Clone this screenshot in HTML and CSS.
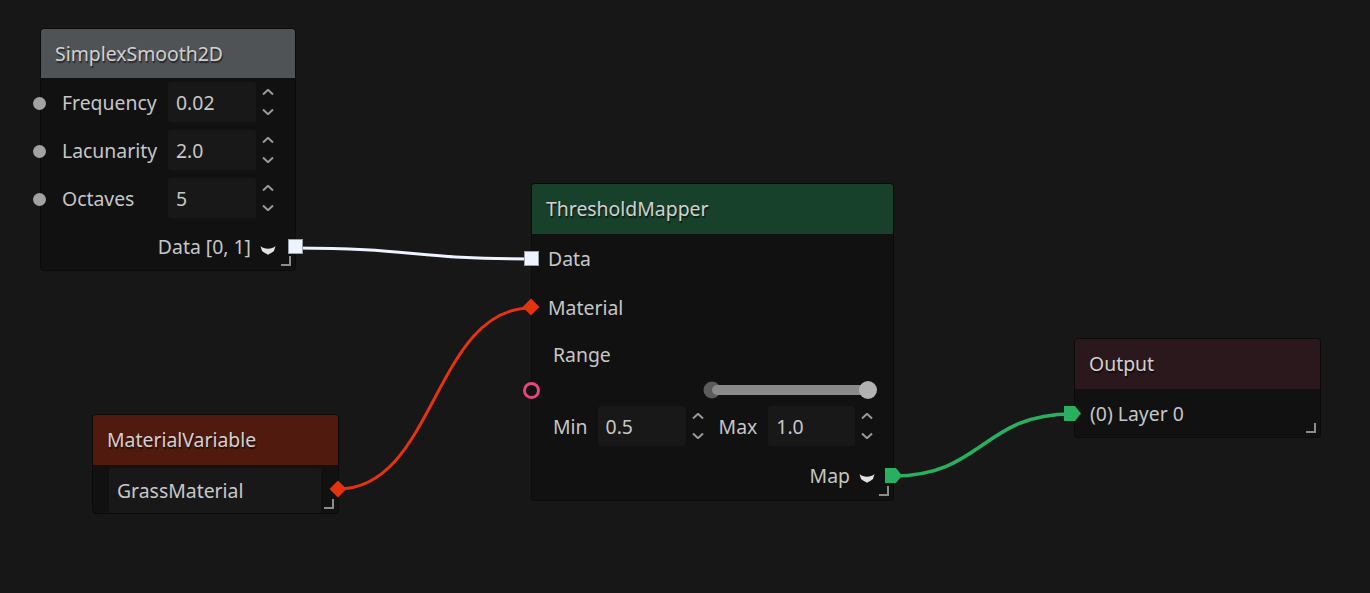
FILE: index.html
```html
<!DOCTYPE html>
<html>
<head>
<meta charset="utf-8">
<link rel="stylesheet" href="styles.css">
</head>
<body>
<div class="graph">
  <svg class="wires" width="1370" height="593" viewBox="0 0 1370 593">
    <path class="wire wire-data" d="M295 248 C413 248 413 259 531 259"/>
    <path class="wire wire-mat" d="M338 489 C435 489 434 308 531 308"/>
    <path class="wire wire-map" d="M893 476 C983 476 982 414 1072 414"/>
  </svg>

  <div class="node n-simplex">
    <div class="title t-gray">SimplexSmooth2D</div>
    <div class="row prop">
      <span class="port p-circle"></span>
      <span class="label">Frequency</span>
      <span class="field">0.02</span>
      <svg class="spin" viewBox="0 0 12 26"><path d="M1 5.5 L6 0.8 L11 5.5 M1 20.5 L6 25.2 L11 20.5"/></svg>
    </div>
    <div class="row prop">
      <span class="port p-circle"></span>
      <span class="label">Lacunarity</span>
      <span class="field">2.0</span>
      <svg class="spin" viewBox="0 0 12 26"><path d="M1 5.5 L6 0.8 L11 5.5 M1 20.5 L6 25.2 L11 20.5"/></svg>
    </div>
    <div class="row prop">
      <span class="port p-circle"></span>
      <span class="label">Octaves</span>
      <span class="field">5</span>
      <svg class="spin" viewBox="0 0 12 26"><path d="M1 5.5 L6 0.8 L11 5.5 M1 20.5 L6 25.2 L11 20.5"/></svg>
    </div>
    <div class="row out-row out-simplex">
      <span class="label">Data [0, 1]</span>
      <svg class="drop" viewBox="0 0 16 10"><path d="M0.5 1 C4 4.5 12 4.5 15.5 1 L14 6 C11 8.5 9 8.5 8 10 C7 8.5 5 8.5 2 6 Z"/></svg>
      <span class="port p-square p-right"></span>
    </div>
    <span class="grip"></span>
  </div>

  <div class="node n-threshold">
    <div class="title t-green">ThresholdMapper</div>
    <div class="row in-row r48">
      <span class="port p-square p-left"></span>
      <span class="label">Data</span>
    </div>
    <div class="row in-row r50">
      <span class="port p-diamond p-left-d"></span>
      <span class="label">Material</span>
    </div>
    <div class="row ctl-row r44">
      <span class="label">Range</span>
    </div>
    <div class="row slider-row">
      <span class="port p-ring"></span>
      <svg class="slider" viewBox="0 0 175 18">
        <circle class="knob-lo" cx="9" cy="9" r="8.5"/>
        <rect class="bar" x="9" y="4" width="156" height="10" rx="5"/>
        <circle class="knob-hi" cx="165" cy="9" r="9"/>
      </svg>
    </div>
    <div class="row ctl-row r48">
      <span class="label lbl-min">Min</span>
      <span class="field">0.5</span>
      <svg class="spin" viewBox="0 0 12 26"><path d="M1 5.5 L6 0.8 L11 5.5 M1 20.5 L6 25.2 L11 20.5"/></svg>
      <span class="label lbl-max">Max</span>
      <span class="field f87">1.0</span>
      <svg class="spin" viewBox="0 0 12 26"><path d="M1 5.5 L6 0.8 L11 5.5 M1 20.5 L6 25.2 L11 20.5"/></svg>
    </div>
    <div class="row out-row out-map">
      <span class="label">Map</span>
      <svg class="drop" viewBox="0 0 16 10"><path d="M0.5 1 C4 4.5 12 4.5 15.5 1 L14 6 C11 8.5 9 8.5 8 10 C7 8.5 5 8.5 2 6 Z"/></svg>
      <svg class="port p-penta p-right-g" viewBox="0 0 17 15"><polygon points="0,0 11,0 17,7.5 11,15 0,15"/></svg>
    </div>
    <span class="grip"></span>
  </div>

  <div class="node n-matvar">
    <div class="title t-red">MaterialVariable</div>
    <div class="row mat-row">
      <span class="field wide">GrassMaterial</span>
      <span class="port p-diamond p-right-d"></span>
    </div>
    <span class="grip"></span>
  </div>

  <div class="node n-output">
    <div class="title t-plum">Output</div>
    <div class="row in-row out-in">
      <svg class="port p-penta p-left-g" viewBox="0 0 17 15"><polygon points="0,0 11,0 17,7.5 11,15 0,15"/></svg>
      <span class="label">(0) Layer 0</span>
    </div>
    <span class="grip"></span>
  </div>
</div>
</body>
</html>
```

FILE: styles.css
```css
html, body {
  margin: 0;
  padding: 0;
  background: #171717;
}

.graph {
  position: relative;
  width: 1370px;
  height: 593px;
  overflow: hidden;
  background: #171717;
  font-family: "Noto Sans", "Open Sans", sans-serif;
  font-size: 19.4px;
  color: #c6c6c6;
}

.wires {
  position: absolute;
  left: 0;
  top: 0;
}

.wire {
  fill: none;
  stroke-width: 3;
  stroke-linecap: round;
}
.wire-data { stroke: #eef4ff; }
.wire-mat { stroke: #e4330e; }
.wire-map { stroke: #27b05f; stroke-width: 3.5; }

.node {
  position: absolute;
  box-sizing: border-box;
  background: #111111;
  border: 1px solid #0b0b0b;
  border-radius: 4px;
  display: flex;
  flex-direction: column;
}

.n-simplex { left: 40px; top: 28px; width: 256px; height: 243px; }
.n-threshold { left: 531px; top: 183px; width: 363px; height: 318px; }
.n-matvar { left: 92px; top: 414px; width: 247px; height: 100px; }
.n-output { left: 1074px; top: 338px; width: 247px; height: 100px; }

.title {
  height: 50px;
  line-height: 50px;
  padding-left: 14px;
  border-radius: 3px 3px 0 0;
  color: #d0d0d0;
  text-shadow: 1px 2px 1px rgba(0, 0, 0, 0.55);
  flex: none;
}
.n-simplex .title { height: 49px; line-height: 50px; }
.t-gray { background: #505356; }
.t-green { background: #17412a; }
.t-red { background: #511a0e; }
.t-plum { background: #2b181c; }

.row {
  position: relative;
  display: flex;
  align-items: center;
  flex: none;
}
.label { line-height: 1; padding-top: 2px; }

.prop {
  height: 48px;
  padding: 0 15px 0 21px;
}
.prop .label { flex: 1; }

.field {
  box-sizing: border-box;
  width: 88px;
  height: 40px;
  line-height: 42px;
  padding-left: 8px;
  background: #181818;
  border-radius: 3px;
  color: #c8c8c8;
}
.field.f87 { width: 87px; }

.spin {
  width: 12px;
  height: 26px;
  margin: 0 6px;
  flex: none;
}
.spin path {
  fill: none;
  stroke: #9a9a9a;
  stroke-width: 2;
}

.out-row {
  height: 48px;
  justify-content: flex-end;
}
.out-simplex { padding-right: 19px; }
.out-map { height: 49px; padding-right: 18px; }

.drop {
  width: 16px;
  height: 10px;
  margin-left: 9px;
  margin-top: 7px;
  flex: none;
}
.drop path { fill: #e2e2e2; }

.in-row { padding-left: 16px; }
.ctl-row { padding-left: 21px; }
.r48 { height: 48px; }
.r50 { height: 50px; }
.r44 { height: 44px; }

.slider-row {
  height: 26px;
  justify-content: flex-end;
  padding-right: 15px;
}
.slider {
  width: 175px;
  height: 18px;
  margin-top: 2px;
}
.knob-lo { fill: #5b5b5b; }
.bar { fill: #8a8a8a; }
.knob-hi { fill: #b2b2b2; }

.lbl-min { margin-right: 10px; }
.lbl-max { margin-left: 9px; margin-right: 11px; }

.mat-row {
  height: 48px;
  padding: 0 17px 0 16px;
  align-items: flex-end;
}
.field.wide {
  flex: 1;
  height: 45px;
  line-height: 46px;
}

.out-in { height: 48px; padding-left: 15px; }

/* ports */
.port {
  position: absolute;
  top: 50%;
  box-sizing: border-box;
}
.p-circle {
  left: -8px;
  width: 13px;
  height: 13px;
  margin-top: -5px;
  border-radius: 50%;
  background: #a2a2a2;
}
.p-square {
  width: 15px;
  height: 15px;
  margin-top: -7px;
  background: #eef4ff;
  border: 1px solid #9aa0a8;
}
.p-square.p-right { right: -8px; }
.p-square.p-left { left: -8px; }
.p-diamond {
  width: 12px;
  height: 12px;
  margin-top: -6px;
  background: #e4330e;
  transform: rotate(45deg);
}
.p-left-d { left: -7px; }
.p-right-d { right: -6px; }
.p-ring {
  left: -9px;
  width: 17px;
  height: 17px;
  margin-top: -7px;
  border-radius: 50%;
  border: 3px solid #e2487c;
  background: #111;
}
.p-penta {
  width: 17px;
  height: 15px;
  margin-top: -7px;
}
.p-penta polygon { fill: #27b05f; }
.p-right-g { right: -9px; }
.p-left-g { left: -11px; }

.grip {
  position: absolute;
  right: 4px;
  bottom: 4px;
  width: 8px;
  height: 8px;
  border-right: 2px solid #8c8c8c;
  border-bottom: 2px solid #8c8c8c;
}
```
